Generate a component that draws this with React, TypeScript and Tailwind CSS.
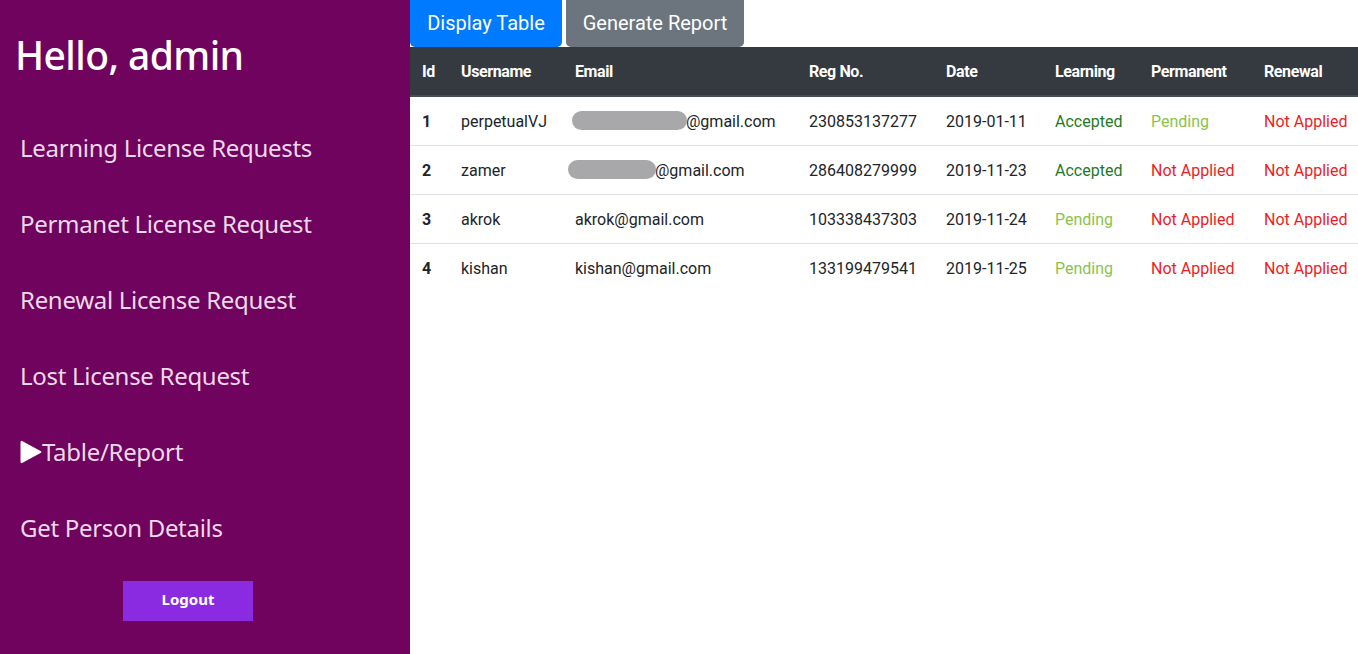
import React from 'react';

const menuItems = [
  'Learning License Requests',
  'Permanet License Request',
  'Renewal License Request',
  'Lost License Request',
  'Table/Report',
  'Get Person Details',
];

type Status = 'Accepted' | 'Pending' | 'Not Applied';

const rows: {
  id: number;
  username: string;
  email: string;
  blob?: string;
  reg: string;
  date: string;
  learning: Status;
  permanent: Status;
  renewal: Status;
}[] = [
  { id: 1, username: 'perpetualVJ', email: '@gmail.com', blob: 'w-[115px] -ml-[3px]', reg: '230853137277', date: '2019-01-11', learning: 'Accepted', permanent: 'Pending', renewal: 'Not Applied' },
  { id: 2, username: 'zamer', email: '@gmail.com', blob: 'w-[88px] -ml-[7px]', reg: '286408279999', date: '2019-11-23', learning: 'Accepted', permanent: 'Not Applied', renewal: 'Not Applied' },
  { id: 3, username: 'akrok', email: 'akrok@gmail.com', reg: '103338437303', date: '2019-11-24', learning: 'Pending', permanent: 'Not Applied', renewal: 'Not Applied' },
  { id: 4, username: 'kishan', email: 'kishan@gmail.com', reg: '133199479541', date: '2019-11-25', learning: 'Pending', permanent: 'Not Applied', renewal: 'Not Applied' },
];

function StatusText({ value }: { value: Status }) {
  if (value === 'Accepted') return <span className="text-[#1f7a1f]">{value}</span>;
  if (value === 'Pending') return <span className="text-[#8bc34a]">{value}</span>;
  return <span className="text-[#ee1c24]">{value}</span>;
}

function Sidebar() {
  return (
    <aside className="w-[410px] shrink-0 bg-[#6f035d] min-h-[654px] font-['Noto_Sans',sans-serif]">
      <h1 className="h-[102px] pt-[8px] pl-[15px] flex items-center text-[39px] font-medium text-white tracking-[-0.6px]">
        Hello, admin
      </h1>
      {/* nav links */}
      <nav className="flex flex-col mt-[8px]">
        {menuItems.map((item) => (
          <a
            key={item}
            href="#"
            className="h-[76px] flex items-center pl-[20px] text-[24px] text-[#ecd9e8] tracking-[-0.3px]"
          >
            {item === 'Table/Report' && (
              <svg width="22" height="24" viewBox="0 0 22 24" className="-mt-[1px]">
                <path d="M2.6 1.2 Q0.5 0 0.5 2.4 L0.5 21.6 Q0.5 24 2.6 22.8 L21 12.8 Q22 12 21 11.2 Z" fill="#ffffff" />
              </svg>
            )}
            {item}
          </a>
        ))}
      </nav>
      <button className="mt-[15px] ml-[123px] w-[130px] h-[40px] pb-[3px] bg-[#8a2be2] text-white text-[15px] font-bold">
        Logout
      </button>
    </aside>
  );
}

function DataTable() {
  const th = 'px-3 pt-[13px] pb-[11px] text-left font-bold';
  const td = 'px-3 pt-[13px] pb-[11px]';
  return (
    <table className="w-full border-collapse text-[16px] leading-6 text-[#212529] table-fixed">
      <colgroup>
        <col className="w-[39px]" />
        <col className="w-[114px]" />
        <col className="w-[234px]" />
        <col className="w-[137px]" />
        <col className="w-[109px]" />
        <col className="w-[96px]" />
        <col className="w-[113px]" />
        <col className="w-[106px]" />
      </colgroup>
      <thead>
        <tr className="bg-[#343a40] text-white border-b-2 border-[#454d55] tracking-[-0.4px]">
          <th className={th}>Id</th>
          <th className={th}>Username</th>
          <th className={th}>Email</th>
          <th className={th}>Reg No.</th>
          <th className={th}>Date</th>
          <th className={th}>Learning</th>
          <th className={th}>Permanent</th>
          <th className={th}>Renewal</th>
        </tr>
      </thead>
      <tbody>
        {rows.map((r) => (
          <tr key={r.id} className="border-b border-[#dee2e6] last:border-b-0">
            <td className={`${td} font-bold`}>{r.id}</td>
            <td className={td}>{r.username}</td>
            <td className={`${td} whitespace-nowrap`}>
              {/* redacted part of the address */}
              {r.blob ? (
                <span
                  className={`inline-block align-middle h-[19px] rounded-full bg-[#a8a8ab] -mr-[1px] -mt-[4px] ${r.blob}`}
                />
              ) : null}
              {r.email}
            </td>
            <td className={td}>{r.reg}</td>
            <td className={td}>{r.date}</td>
            <td className={`${td} whitespace-nowrap`}><StatusText value={r.learning} /></td>
            <td className={`${td} whitespace-nowrap`}><StatusText value={r.permanent} /></td>
            <td className={`${td} whitespace-nowrap`}><StatusText value={r.renewal} /></td>
          </tr>
        ))}
      </tbody>
    </table>
  );
}

export default function App() {
  return (
    <div className="flex w-[1358px] h-[654px] overflow-hidden bg-white">
      <Sidebar />
      <main className="flex-1 font-['Roboto',sans-serif]">
        <div className="flex gap-[4px]">
          <button className="w-[152px] h-[47px] pb-[1px] rounded-b-[5px] bg-[#007bff] text-white text-[20px]">Display Table</button>
          <button className="w-[178px] h-[47px] pb-[1px] rounded-b-[5px] bg-[#6c757d] text-white text-[20px]">Generate Report</button>
        </div>
        <DataTable />
      </main>
    </div>
  );
}
